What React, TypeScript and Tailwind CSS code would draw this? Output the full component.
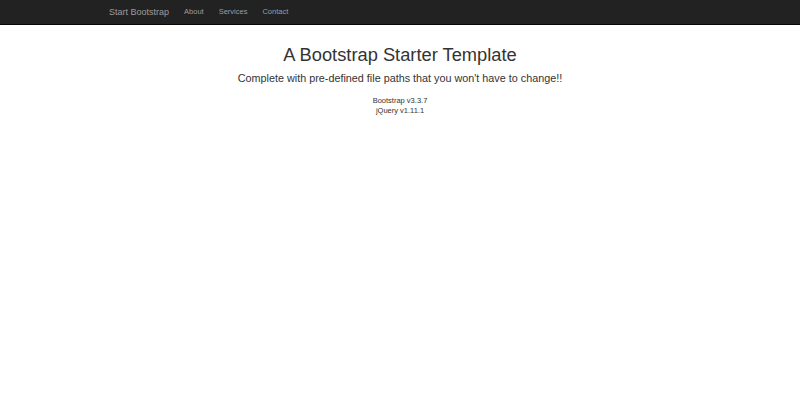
export default function App() {
  const links = ['About', 'Services', 'Contact'];
  return (
    <div className="min-h-screen bg-white font-['Liberation_Sans',Arial,sans-serif] text-[#333]">
      <nav className="h-[25px] border-b border-[#080808] bg-[#222]">
        <div className="flex h-full items-start pl-[101.5px]">
          <a className="px-[7.5px] py-[7px] text-[9px] leading-[10px] text-[#9d9d9d]">
            Start Bootstrap
          </a>
          <ul className="flex">
            {links.map((l) => (
              <li key={l}>
                <a className="block px-[7.5px] py-[7px] text-[7.5px] leading-[10px] text-[#9d9d9d]">
                  {l}
                </a>
              </li>
            ))}
          </ul>
        </div>
      </nav>
      <main className="pt-[19.5px] text-center">
        <h1 className="text-[18.3px] leading-[1.1]">A Bootstrap Starter Template</h1>
        <p className="mt-[6px] text-[10.8px] leading-[1.4]">
          Complete with pre-defined file paths that you won't have to change!!
        </p>
        <ul className="mt-[10.5px] text-[7.5px] leading-[9.5px]">
          <li>Bootstrap v3.3.7</li>
          <li>jQuery v1.11.1</li>
        </ul>
      </main>
    </div>
  );
}
